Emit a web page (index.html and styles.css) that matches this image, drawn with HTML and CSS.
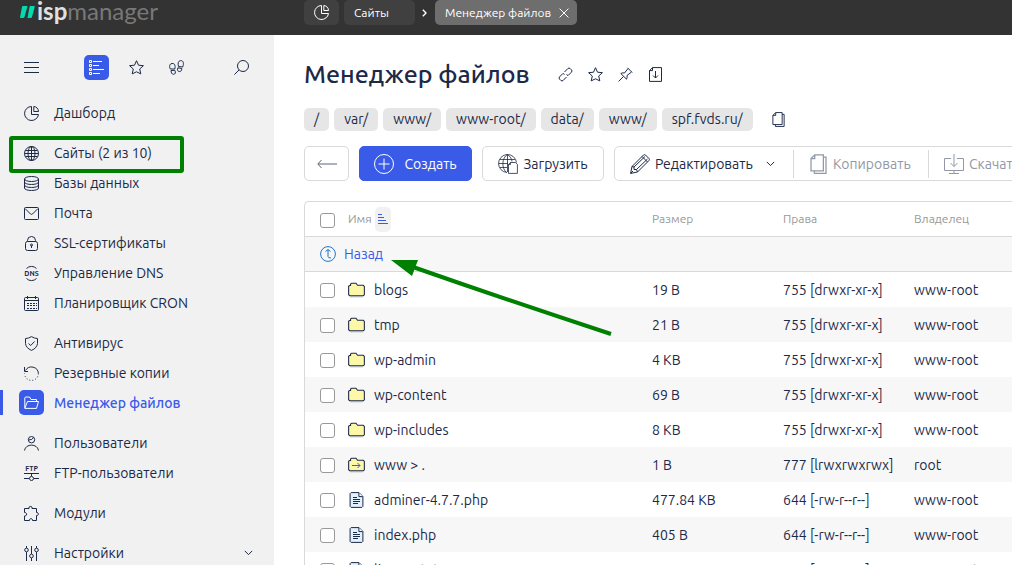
FILE: index.html
```html
<!DOCTYPE html>
<html lang="ru">
<head>
    <meta charset="utf-8">
    <title>Менеджер файлов</title>
    <link rel="stylesheet" href="styles.css">
</head>
<body>
<svg class="sprite" width="0" height="0" aria-hidden="true">
    <symbol id="pie" viewBox="0 0 15 15"><path d="M7.500.5A7 7 0 1 0 14.500 8.500H7.500Z"/><path d="M9.800.5V5.500H14.500A5 5 0 0 0 9.800.5Z"/></symbol>
    <symbol id="star" viewBox="0 0 15 15"><path d="M7.500.7 9.500 5.200 14.400 5.700 10.700 9 11.800 13.900 7.500 11.800 3.200 13.900 4.300 9 .6 5.700 5.500 5.200Z"/></symbol>
    <symbol id="copy" viewBox="0 0 15 16"><path d="M4.500.6H11.400V13.400H1.500V3.600ZM4.500.6V3.600H1.500M11.400 2.500H13.500V15.400H4.200V13.400"/></symbol>
    <symbol id="down" viewBox="0 0 9 6"><path d="M.8.9 4.500 4.600 8.200.9"/></symbol>
    <symbol id="folder" viewBox="0 0 16 14"><path d="M2 13.500H14" stroke="#c4ccd4"/><path d="M.6 3.500 1.600 2.700H2.400V1.400L3.400.6H7.500L9 2.600H14.400L15.400 3.600V11.500L14.400 12.400H1.600L.6 11.400Z" fill="#fdf8a8"/></symbol>
    <symbol id="file" viewBox="0 0 14 16"><path d="M1.600.6H9.500L13.400 4.500V14.400L12.400 15.400H1.600L.6 14.400V1.600Z" fill="#e2f1ff"/><path d="M9.400.8V4.600H13.200" fill="#fff"/><path d="M3.500 5.500H7.500M3.500 7.500H10.500M3.500 9.500H10.500M3.500 11.500H8.500"/></symbol>
</svg>

<header class="topbar">
    <a class="logo" href="#">
        <svg width="15" height="12" viewBox="0 0 15 12"><path d="M3 0H7.500L4.500 11Q4.200 12 3 12H.8Q-.2 12 .1 11L2 1Q2.200 0 3 0ZM10.500 0H14Q15 0 14.700 1L12 11Q11.700 12 10.700 12H7.500L9.500 1Q9.700 0 10.500 0Z" fill="#00dcb0"/></svg>
        <span><b>isp</b>manager</span>
    </a>
    <nav class="tabs">
        <a class="tab tab-icon" href="#" aria-label="Дашборд"><svg class="icon"><use href="#pie"/></svg></a>
        <a class="tab tab-sites" href="#">Сайты</a>
        <svg class="tab-arrow" width="5" height="8" viewBox="0 0 5 8"><path d="M.8.8 4 4 .8 7.200" stroke-width="1.4"/></svg>
        <div class="tab tab-active">Менеджер файлов
            <button class="tab-close" aria-label="Закрыть"><svg width="10" height="10" viewBox="0 0 10 10"><path d="M.6.6 9.400 9.400M9.400.6.6 9.400"/></svg></button>
        </div>
    </nav>
</header>

<div class="page">
    <aside class="sidebar">
        <div class="side-tools">
            <button class="tool" aria-label="Меню"><svg class="icon"><path d="M0 2.500H15M0 7.500H15M0 12.500H15"/></svg></button>
            <div class="side-modes">
                <button class="tool tool-on" aria-label="Список"><svg class="icon"><path d="M.5.5H2.500V2.500H.5ZM.5 4.500H2.500V6.500H.5ZM.5 8.500H2.500V10.500H.5ZM.5 12.500H2.500V14.500H.5ZM4 1.500H13M4 5.500H10M4 9.500H15M4 13.500H11"/></svg></button>
                <button class="tool" aria-label="Избранное"><svg class="icon"><use href="#star"/></svg></button>
                <button class="tool" aria-label="История"><svg class="icon"><path d="M1.300 9C.2 7 .2 3.800 3 3.500 5.800 3.200 6.600 5.500 5.800 9ZM2 10.500 5.800 10.300C7 12.500 6.300 14.300 4.500 14.300 2.800 14.300 2.200 12.800 2 10.500ZM9.500 6.500C8.600 3.500 9.300.6 11.700.6 14.600.6 15 3.400 13.700 7ZM8.900 7.800 12.800 8.500C12.700 10.600 11.900 11.700 10.300 11.600 8.600 11.400 8 9.800 8.900 7.800Z"/></svg></button>
            </div>
            <button class="tool" aria-label="Поиск"><svg class="icon"><circle cx="9" cy="6" r="5.500"/><path d="M5 10 .4 14.600"/></svg></button>
        </div>

        <nav class="menu">
            <ul>
                <li><a href="#"><svg class="icon"><use href="#pie"/></svg>Дашборд</a></li>
            </ul>
            <ul>
                <li class="marked"><a href="#"><svg class="icon"><circle cx="7.500" cy="7.500" r="7"/><ellipse cx="7.500" cy="7.500" rx="3.500" ry="7"/><path d="M7.500.5V14.500M.5 7.500H14.500M1.500 4.500H13.500M1.500 10.500H13.500"/></svg>Сайты (2 из 10)</a></li>
                <li><a href="#"><svg class="icon"><ellipse cx="7.500" cy="3" rx="7" ry="2.500"/><path d="M.5 3V12C.5 15.300 14.500 15.300 14.500 12V3M.5 6C.5 9.300 14.500 9.300 14.500 6M.5 9C.5 12.300 14.500 12.300 14.500 9"/></svg>Базы данных</a></li>
                <li><a href="#"><svg class="icon"><rect x=".5" y="1.500" width="14" height="12" rx="1"/><path d="M1 2.500 6.500 8Q7.500 8.800 8.500 8L14 2.500"/></svg>Почта</a></li>
                <li><a href="#"><svg class="icon"><rect x="1.500" y="5.500" width="12" height="9" rx="2"/><path d="M3.500 5.500V4.500A4 4 0 0 1 11.500 4.500V5.500M7.500 9.500V12"/><circle cx="7.500" cy="9" r="1"/></svg>SSL-сертификаты</a></li>
                <li><a href="#"><svg class="icon"><path d="M2.500 2.500A7 7 0 0 1 12.500 2.500M2.500 12.500A7 7 0 0 0 12.500 12.500"/><text class="icon-text" x="7.500" y="10">DNS</text></svg>Управление DNS</a></li>
                <li><a href="#"><svg class="icon"><rect x=".5" y="1.500" width="14" height="13" rx="1"/><path d="M.5 4.500H14.500M3.500 0V3M11.500 0V3"/><path d="M3 7.500H13M3 9.500H13M3 12.500H13" stroke-dasharray="2 1"/></svg>Планировщик CRON</a></li>
            </ul>
            <ul>
                <li><a href="#"><svg class="icon"><path d="M7.500.6Q10.500 2.500 13.500 2.500V7.500Q13 12 7.500 14.400 2 12 1.500 7.500V2.500Q4.500 2.500 7.500.6ZM4.500 7.500 6.700 9.500 10.500 5.500"/></svg>Антивирус</a></li>
                <li><a href="#"><svg class="icon"><path d="M1.500 4.500A6.900 6.900 0 0 1 14.400 7.500M.5 1V5.500H4"/><path d="M14.400 7.500A6.900 6.900 0 0 1 .6 7.500" stroke-dasharray="1 2"/></svg>Резервные копии</a></li>
                <li class="current"><a href="#"><span class="current-icon"><svg class="icon"><path d="M.8 13V3L1.500 2H5.500L7 4.500H12.500V6.500M3.500 6.500H14.500L12.500 13.400H.8Z"/></svg></span>Менеджер файлов</a></li>
            </ul>
            <ul>
                <li><a href="#"><svg class="icon"><circle cx="7.500" cy="3.700" r="3.200"/><path d="M4.500 4Q8.500 4 9.500 1.500M.5 14.500C1.500 7.300 13.500 7.300 14.500 14.500"/></svg>Пользователи</a></li>
                <li><a href="#"><svg class="icon"><text class="icon-text" x="7.500" y="5">FTP</text><path d="M0 7.500H15M7.500 7.500V10M0 12.500H5M10 12.500H15"/><circle cx="7.500" cy="12.500" r="2"/></svg>FTP-пользователи</a></li>
            </ul>
            <ul>
                <li><a href="#"><svg class="icon"><path d="M.5 2.500H5V1Q6.500-.2 8 1V2.500H12.500V6.500H13.500Q15.500 8 13.500 9.500H12.500V14.500H8.500V13.500Q7 11.500 5.500 13.500V14.500H.5V10H1.500Q4 8 1.500 6.500H.5Z"/></svg>Модули</a></li>
            </ul>
            <ul>
                <li><a href="#"><svg class="icon"><path d="M2.500 0V2M2.500 6V15M7.500 0V8M7.500 12V15M12.500 0V2M12.500 6V15"/><circle cx="2.500" cy="4" r="1.800"/><circle cx="7.500" cy="10" r="1.800"/><circle cx="12.500" cy="4" r="1.800"/></svg>Настройки<svg class="more" width="9" height="6"><use href="#down"/></svg></a></li>
            </ul>
        </nav>
    </aside>

    <main class="content">
        <div class="title-row">
            <h1>Менеджер файлов</h1>
            <button class="plain" aria-label="Ссылка"><svg class="icon"><path d="M6.500 5 9.800 1.600Q11 .4 12.200 1.600L13.400 2.800Q14.600 4 13.400 5.200L10 8.600 8.500 7.500M8.500 10 5.200 13.400Q4 14.600 2.800 13.400L1.600 12.200Q.4 11 1.600 9.800L5 6.400 6.500 7.500"/></svg></button>
            <button class="plain" aria-label="В избранное"><svg class="icon"><use href="#star"/></svg></button>
            <button class="plain" aria-label="Закрепить"><svg class="icon"><path d="M9.500.8 14.200 5.500M10 1.500 6.500 6Q4.500 5.500 2.800 6.500L8.500 12.200Q9.500 10.500 9 8.500L13.500 5M5.500 9.500.6 14.400"/></svg></button>
            <button class="plain" aria-label="Выгрузить"><svg class="icon"><path d="M4.500.6H13.500V14.400H1.500V3.600ZM4.500.6V3.600H1.500M7.500 4V11M5 8.500 7.500 11 10 8.500"/></svg></button>
        </div>

        <nav class="crumbs">
            <a href="#">/</a>
            <a href="#">var/</a>
            <a href="#">www/</a>
            <a href="#">www-root/</a>
            <a href="#">data/</a>
            <a href="#">www/</a>
            <a href="#">spf.fvds.ru/</a>
            <button class="plain" aria-label="Скопировать путь"><svg class="icon"><use href="#copy"/></svg></button>
        </nav>

        <div class="actions">
            <button class="btn btn-back" aria-label="Назад"><svg width="20" height="10" viewBox="0 0 20 10"><path d="M4.500 1 .8 5 4.500 9M1 5H20"/></svg></button>
            <button class="btn btn-create"><svg width="20" height="20" viewBox="0 0 20 20"><circle cx="10" cy="10" r="9.500"/><path d="M10 4.500V15.500M4.500 10H15.500"/></svg>Создать</button>
            <button class="btn btn-upload"><svg width="20" height="20" viewBox="0 0 20 20"><g stroke-width=".8"><path d="M9 18.500A9 9 0 1 1 18.500 8.500M9.500.5C3.500 4 3.500 14.500 8.500 18.500M9.500.5C12.500 2.500 13.800 5 14 7.500M9.500.5V18M.5 9.500H10M2 5.500H17M2 13.500H9"/><path d="M12.500 8.500H17.500L19.400 10.500V19.400H10.500V10.500Z" fill="#fff"/><path d="M12.500 8.500V10.500H10.500"/></g></svg>Загрузить</button>
            <div class="btn-group">
                <button class="group-edit"><svg width="20" height="20" viewBox="0 0 20 20"><path d="M2 12.500 13.500 1Q14.500.3 15.500 1L19 4.500Q19.800 5.500 19 6.500L7.500 18 .6 19.400ZM2 12.500 4 13V15.500H6.500L7.500 18M4 13 15 2.500M6.500 15.500 17.500 5M12 2.500 17.500 8M.6 19.400 3 17"/></svg>Редактировать<svg width="9" height="6"><use href="#down"/></svg></button>
                <button class="group-copy" disabled><svg width="19" height="20"><use href="#copy"/></svg>Копировать</button>
                <button class="group-download" disabled><svg width="20" height="20" viewBox="0 0 20 20"><path d="M7 4.500H.5V16.500H19.500V4.500H13M10 0V12.500M6.500 9 10 12.500 13.500 9M10 16.500V19M5 19.500H15"/></svg>Скачать</button>
            </div>
        </div>

        <div class="table-wrap">
            <table>
                <colgroup>
                    <col class="col-check"><col class="col-name"><col class="col-size"><col class="col-rights"><col>
                </colgroup>
                <thead>
                    <tr>
                        <th><input type="checkbox" aria-label="Выбрать все"></th>
                        <th><div class="name">Имя<button class="sort" aria-label="Сортировка"><svg width="10" height="12" viewBox="0 0 10 12"><path d="M0 1.500H4M0 4.500H6M0 7.500H8M0 10.500H10"/></svg></button></div></th>
                        <th>Размер</th>
                        <th>Права</th>
                        <th>Владелец</th>
                    </tr>
                </thead>
                <tbody>
                    <tr class="back-row">
                        <td colspan="5"><a href="#"><svg width="16" height="16" viewBox="0 0 16 16"><circle cx="8" cy="8" r="7.400"/><path d="M5.500 5.500 8 3.500 10.500 5.500M8 3.500V10.500Q8 12 11 12"/></svg>Назад</a></td>
                    </tr>
                    <tr><td><input type="checkbox" aria-label="blogs"></td><td><div class="name"><svg class="type"><use href="#folder"/></svg>blogs</div></td><td>19 B</td><td>755 [drwxr-xr-x]</td><td>www-root</td></tr>
                    <tr><td><input type="checkbox" aria-label="tmp"></td><td><div class="name"><svg class="type"><use href="#folder"/></svg>tmp</div></td><td>21 B</td><td>755 [drwxr-xr-x]</td><td>www-root</td></tr>
                    <tr><td><input type="checkbox" aria-label="wp-admin"></td><td><div class="name"><svg class="type"><use href="#folder"/></svg>wp-admin</div></td><td>4 KB</td><td>755 [drwxr-xr-x]</td><td>www-root</td></tr>
                    <tr><td><input type="checkbox" aria-label="wp-content"></td><td><div class="name"><svg class="type"><use href="#folder"/></svg>wp-content</div></td><td>69 B</td><td>755 [drwxr-xr-x]</td><td>www-root</td></tr>
                    <tr><td><input type="checkbox" aria-label="wp-includes"></td><td><div class="name"><svg class="type"><use href="#folder"/></svg>wp-includes</div></td><td>8 KB</td><td>755 [drwxr-xr-x]</td><td>www-root</td></tr>
                    <tr><td><input type="checkbox" aria-label="www"></td><td><div class="name"><svg class="type"><use href="#folder"/><path class="link-arrow" d="M4 8.500H12M9.500 6 12 8.500 9.500 11"/></svg>www &gt; .</div></td><td>1 B</td><td>777 [lrwxrwxrwx]</td><td>root</td></tr>
                    <tr><td><input type="checkbox" aria-label="adminer-4.7.7.php"></td><td><div class="name"><svg class="type"><use href="#file"/></svg>adminer-4.7.7.php</div></td><td>477.84 KB</td><td>644 [-rw-r--r--]</td><td>www-root</td></tr>
                    <tr><td><input type="checkbox" aria-label="index.php"></td><td><div class="name"><svg class="type"><use href="#file"/></svg>index.php</div></td><td>405 B</td><td>644 [-rw-r--r--]</td><td>www-root</td></tr>
                    <tr><td><input type="checkbox" aria-label="license.txt"></td><td><div class="name"><svg class="type"><use href="#file"/></svg>license.txt</div></td><td>19 KB</td><td>644 [-rw-r--r--]</td><td>www-root</td></tr>
                </tbody>
            </table>
            <svg class="pointer" width="222" height="78" viewBox="0 0 222 78"><path d="M22 7Q122 42 220 74" stroke="#008000" stroke-width="4"/><path d="M0 0H27L21 16Z" fill="#008000"/></svg>
        </div>
    </main>
</div>
</body>
</html>
```
FILE: styles.css
```css
*,
*::after {
    box-sizing: border-box;
}

body {
    display: flex;
    flex-direction: column;
    height: 100vh;
    margin: 0;
    overflow: hidden;
    background: #fff;
    color: #1c2947;
    font-family: Ubuntu, "Noto Sans", sans-serif;
    font-size: 14px;
    line-height: 20px;
}

a {
    color: inherit;
    text-decoration: none;
}

button {
    display: flex;
    align-items: center;
    justify-content: center;
    padding: 0;
    border: none;
    background: none;
    color: inherit;
    font: inherit;
    white-space: nowrap;
    cursor: pointer;
}

svg {
    flex: none;
    fill: none;
    stroke: currentColor;
}

.sprite {
    position: absolute;
}

.icon {
    width: 15px;
    height: 15px;
    overflow: visible;
}

.icon-text {
    fill: currentColor;
    stroke: none;
    font-size: 7px;
    font-weight: bold;
    text-anchor: middle;
}

/* верхняя панель */
.topbar {
    display: flex;
    flex: none;
    height: 35px;
    background: #333;
}

.logo {
    display: flex;
    align-items: flex-start;
    flex: none;
    gap: 2px;
    width: 304px;
    padding-left: 20px;
    color: #787878;
    font-family: Lato, sans-serif;
    font-size: 24px;
    line-height: 22px;
}

.logo svg {
    margin-top: 6px;
    stroke: none;
}

.logo b {
    color: #e0e0e0;
}

.tabs {
    display: flex;
    align-items: center;
    height: 25px;
    color: #fff;
    font-size: 12px;
}

.tab {
    display: flex;
    align-items: center;
    height: 25px;
    padding: 0 10px;
    border-radius: 5px;
    background: #404040;
}

.tab-icon {
    margin-right: 5px;
}

.tab-sites {
    width: 71px;
}

.tab-arrow {
    margin: 0 8px 0 7px;
}

.tab-active {
    gap: 8px;
    padding-right: 8px;
    background: #6e6e6e;
}

/* боковое меню */
.page {
    display: flex;
    flex: 1;
    min-height: 0;
}

.sidebar {
    flex: none;
    width: 274px;
    padding-top: 20px;
    background: #f1f1f1;
}

.side-tools {
    display: flex;
    justify-content: space-between;
    margin-bottom: 18px;
    padding: 0 20px 0 19px;
}

.side-modes {
    display: flex;
    gap: 15px;
}

.tool {
    width: 25px;
    height: 25px;
    border-radius: 5px;
}

.tool-on {
    background: #3a5ae8;
    color: #fff;
}

.menu ul {
    margin: 0 0 10px;
    padding: 0;
    list-style: none;
}

.menu a {
    display: flex;
    align-items: center;
    gap: 15px;
    height: 30px;
    padding: 0 21px 0 24px;
}

.more {
    margin-left: auto;
}

.marked {
    position: relative;
}

.marked::after {
    content: "";
    position: absolute;
    top: -2px;
    left: 9px;
    width: 175px;
    height: 37px;
    border: 4px solid #008000;
    border-radius: 3px;
}

.menu .current {
    padding: 2px 0 3px;
}

.menu .current a {
    gap: 10px;
    height: 25px;
    padding-left: 16px;
    border-left: 3px solid #3a5ae8;
    color: #3a5ae8;
    font-weight: 500;
}

.current-icon {
    display: flex;
    padding: 5px;
    border-radius: 5px;
    background: #3a5ae8;
    color: #fff;
}

/* содержимое */
.content {
    flex: 1;
    min-width: 0;
    padding: 24px 0 0 30px;
    overflow: hidden;
}

.title-row {
    display: flex;
    align-items: center;
    gap: 15px;
    height: 30px;
    margin-bottom: 19px;
}

h1 {
    margin: 0 13px 0 0;
    font-size: 25px;
    font-weight: 500;
}

.crumbs {
    display: flex;
    gap: 5px;
    margin-bottom: 15px;
}

.crumbs a {
    padding: 0 10px;
    border-radius: 5px;
    background: #e6e6e6;
    line-height: 23px;
}

.crumbs .plain {
    margin-left: 13px;
}

.actions {
    display: flex;
    gap: 10px;
    margin-bottom: 20px;
}

.btn {
    flex: none;
    height: 35px;
    border: 1px solid #d9d9d9;
    border-radius: 5px;
}

.btn-back {
    width: 45px;
    color: #5a6479;
}

.btn-create {
    gap: 10px;
    width: 113px;
    border-color: #3a5ae8;
    background: #3a5ae8;
    color: #fff;
}

.btn-upload {
    gap: 5px;
    width: 122px;
}

.btn-group {
    display: flex;
    flex: none;
    align-items: center;
    height: 35px;
    border: 1px solid #d9d9d9;
    border-radius: 5px;
}

.btn-group button {
    justify-content: flex-start;
    gap: 5px;
    height: 28px;
    padding: 0 15px;
}

.btn-group button + button {
    border-left: 1px solid #d9d9d9;
}

.btn-group button:disabled {
    color: #9298a5;
}

.group-edit {
    width: 178px;
}

.group-edit svg:last-child {
    margin-left: 8px;
}

.group-copy {
    width: 135px;
}

.group-download {
    width: 120px;
}

/* список файлов */
.table-wrap {
    position: relative;
    border: 1px solid #d9d9d9;
    border-right: none;
    border-radius: 5px 0 0 0;
}

table {
    width: 100%;
    min-width: 707px;
    border-spacing: 0;
    table-layout: fixed;
}

.col-check {
    width: 43px;
}

.col-name {
    width: 304px;
}

.col-size,
.col-rights {
    width: 131px;
}

th,
td {
    height: 35px;
    padding: 0;
    text-align: left;
    white-space: nowrap;
}

th {
    color: #999;
    font-size: 12px;
    font-weight: normal;
}

th:first-child,
td:first-child {
    padding-left: 15px;
}

tbody tr:nth-child(odd) {
    background: #f7f7f7;
}

th,
.back-row td {
    border-bottom: 1px solid #d9d9d9;
}

.back-row a {
    display: flex;
    align-items: center;
    gap: 8px;
    color: #3a5ae8;
}

.back-row svg {
    color: #1f73c9;
}

input[type="checkbox"] {
    display: block;
    width: 15px;
    height: 15px;
    margin: 2px 0 0;
    border: 1px solid #999;
    border-radius: 3px;
    background: #fff;
    appearance: none;
}

.name {
    display: flex;
    align-items: center;
    gap: 9px;
}

th .name {
    gap: 3px;
}

.sort {
    width: 16px;
    height: 25px;
    border-radius: 5px;
    background: #f1f1f1;
    color: #3a5ae8;
}

.type {
    width: 17px;
    height: 16px;
}

.link-arrow {
    stroke: #3a5ae8;
}

.pointer {
    position: absolute;
    top: 58px;
    left: 86px;
    stroke: none;
}
```
